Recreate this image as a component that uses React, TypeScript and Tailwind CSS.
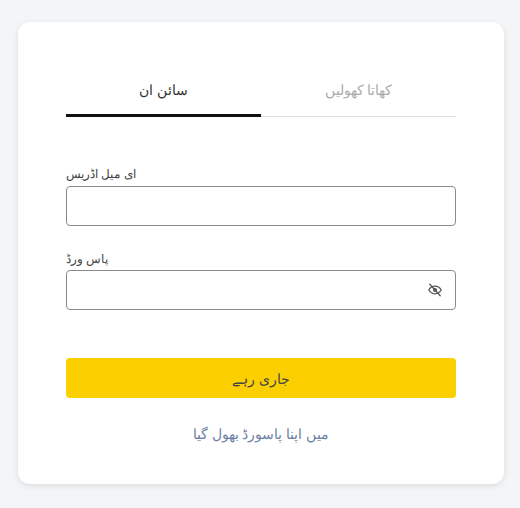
export default function App() {
  return (
    <div className="min-h-[508px] bg-[#f3f5f7] pt-[22px] pl-[18px] font-['Liberation_Sans',sans-serif]">
      <div className="h-[462px] w-[486px] rounded-xl bg-white px-12 pt-12 shadow-[0_2px_6px_rgba(0,0,0,0.1)]">
        <div className="flex">
          <div className="flex h-[47px] w-[195px] items-start justify-center border-b-[3px] border-[#111111] pt-2.5 text-sm text-[#333333]">
            سائن ان
          </div>
          <div className="flex h-[47px] w-[195px] items-start justify-center border-b border-[#dddddd] pt-2.5 text-sm text-[#aaaaaa]">
            کھاتا کھولیں
          </div>
        </div>

        <label className="mt-[47px] block text-xs leading-5 text-[#444444]">
          ای میل اڈریس
        </label>
        <div className="mt-[2px] h-10 rounded border border-[#8a8a8a]" />

        <label className="mt-[23px] block text-xs leading-5 text-[#444444]">
          پاس ورڈ
        </label>
        <div className="mt-[1px] flex h-10 items-center justify-end rounded border border-[#8a8a8a] pr-[12px]">
          <svg viewBox="0 0 16 16" fill="none" stroke="#555555" strokeWidth="1.3" strokeLinecap="round" className="h-4 w-4">
            <path d="M1.8 8C3.2 5.6 5.4 4.2 8 4.2S12.8 5.6 14.2 8C12.8 10.4 10.6 11.8 8 11.8S3.2 10.4 1.8 8Z" />
            <circle cx="8" cy="8" r="2" fill="#555555" stroke="none" />
            <path d="M2.8 2.2 13.2 13.8" />
          </svg>
        </div>

        <button className="mt-12 flex h-10 w-full items-center justify-center rounded bg-[#fcd000] pt-0.5 text-sm text-[#444444]">
          جاری رہے
        </button>
        <div className="mt-[26px] text-center text-sm text-[#6a7fa3]">
          میں اپنا پاسورڈ بھول گیا
        </div>
      </div>
    </div>
  );
}
